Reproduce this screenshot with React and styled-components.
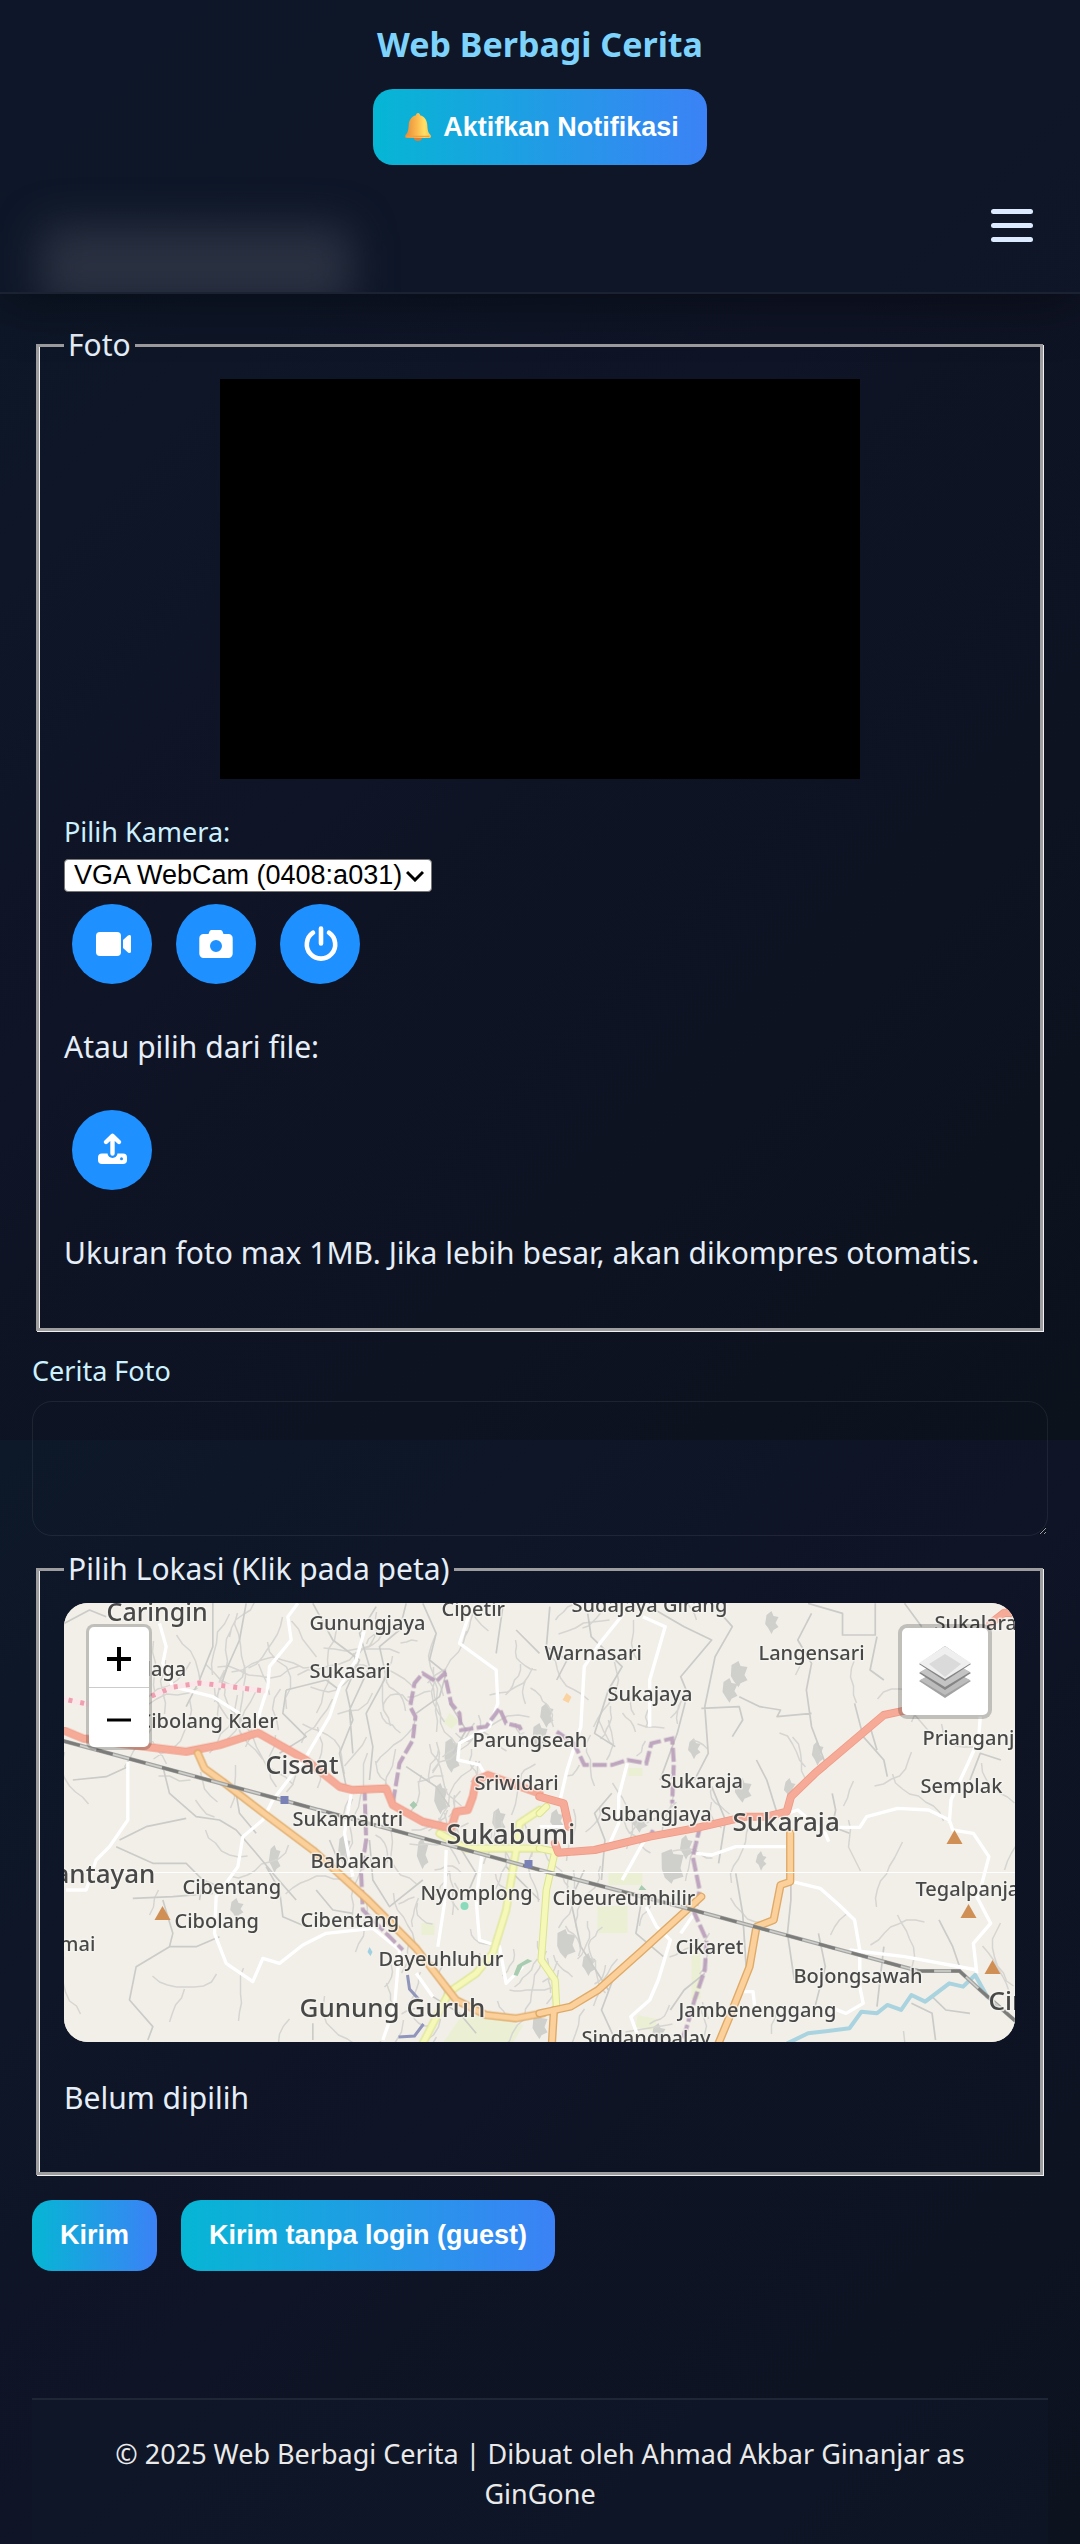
import React from "react";
import styled, { createGlobalStyle } from "styled-components";

const ui = '"Noto Sans", "Open Sans", sans-serif';
const control = '"Liberation Sans", Arial, sans-serif';

const GlobalStyle = createGlobalStyle`
  *, *::before, *::after { box-sizing: border-box; }
  body {
    margin: 0;
    color: #e6eef8;
    font-family: ${ui};
    font-size: 30px;
    line-height: 48px;
    background-color: #0e1525;
    background-image: linear-gradient(135deg, #0d1828 0%, #0f1426 45%, #0b121c 100%);
    background-size: 100% 1440px;
  }
`;

const Header = styled.header`
  position: relative;
  z-index: 1;
  overflow: hidden;
  display: flex;
  flex-direction: column;
  align-items: center;
  padding: 20px 47px 50px;
  border-bottom: 2px solid #1b2333;
  background: rgba(15, 23, 42, 0.6);
  box-shadow: 0 10px 48px rgba(0, 0, 0, 0.4);
`;

const HeadingGlow = styled.div`
  position: absolute;
  left: 40px;
  bottom: -16px;
  width: 312px;
  height: 82px;
  border-radius: 16px;
  background: #2a3141;
  filter: blur(20px);
`;

const Title = styled.h1`
  margin: 0 0 21px;
  color: #7dd3fc;
  font-size: 34px;
  line-height: 48px;
  font-weight: 700;
`;

const GradientButton = styled.button`
  display: flex;
  align-items: center;
  gap: 12px;
  border: 0;
  border-radius: 20px;
  padding: ${(p) => (p.$large ? "23px 28px 23px 32px" : "20px 28px 21px")};
  color: #fff;
  background: linear-gradient(90deg, #06b6d4, #3b82f6);
  font-family: ${control};
  font-size: 27px;
  line-height: 30px;
  font-weight: 700;
`;

const MenuButton = styled.button`
  position: relative;
  align-self: flex-end;
  display: flex;
  flex-direction: column;
  gap: 9px;
  margin-top: 44px;
  padding: 0;
  border: 0;
  background: none;
`;

const MenuBar = styled.span`
  width: 42px;
  height: 5px;
  border-radius: 3px;
  background: #dbeafe;
`;

const Main = styled.main`
  padding: 29px 32px 0;
`;

const Fieldset = styled.fieldset`
  min-width: 0;
  margin: 0 5px 0 4px;
  padding: 12px 25px;
  border: 3px solid #9d9d9f;
  box-shadow: 1px 1px 0 #eef0f2, inset 1px 0 0 #eef0f2;
`;

const Legend = styled.legend`
  padding: 0 4px;
  line-height: 44px;
`;

const Preview = styled.video`
  display: block;
  width: 640px;
  max-width: 100%;
  height: 400px;
  margin: 0 auto 33px;
  background: #000;
`;

const Label = styled.label`
  display: block;
  color: #cdf1fe;
  font-size: 27px;
  line-height: 40px;
`;

const SelectWrap = styled.div`
  display: grid;
  width: 368px;
  margin: 7px 0 12px;
  align-items: center;
  & > * { grid-area: 1 / 1; }
  & > svg { justify-self: end; margin-right: 8px; pointer-events: none; }
`;

const Select = styled.select`
  appearance: none;
  width: 100%;
  height: 33px;
  padding: 0 28px 0 9px;
  border: 1px solid #767676;
  border-radius: 4px;
  color: #000;
  background: #fff;
  font-family: ${control};
  font-size: 27px;
  line-height: 31px;
`;

const RoundRow = styled.div`
  display: flex;
  gap: 24px;
  padding-left: 8px;
`;

const RoundButton = styled.button`
  width: 80px;
  height: 80px;
  padding: 0;
  border: 0;
  border-radius: 50%;
  color: #fff;
  background: #1e90ff;
  & > svg { display: block; }
`;

const Text = styled.p`
  margin: 39px 0;
`;

const Story = styled.div`
  margin: 20px 0 11px;
`;

const TextArea = styled.textarea`
  display: block;
  width: 100%;
  height: 135px;
  margin-top: 10px;
  padding: 16px;
  border: 1px solid rgba(255, 255, 255, 0.07);
  border-radius: 20px;
  color: #e6eef8;
  background: transparent;
  font-family: ${ui};
  font-size: 27px;
`;

const MapBox = styled.div`
  position: relative;
  height: 439px;
  overflow: hidden;
  border-radius: 24px;
  background: #f2efe9;
`;

const MapArt = styled.svg`
  display: block;
  width: 100%;
  height: 100%;
`;

const ZoomControl = styled.div`
  position: absolute;
  top: 21px;
  left: 22px;
  width: 66px;
  border: 3px solid rgba(0, 0, 0, 0.2);
  border-radius: 8px;
  background: #fff;
  background-clip: padding-box;
`;

const ZoomButton = styled.button`
  display: block;
  width: 100%;
  height: 60px;
  padding: 4px 18px 0;
  border: 0;
  background: none;
  & + & { border-top: 1px solid #ccc; }
  & > svg { display: block; }
`;

const LayersButton = styled.button`
  position: absolute;
  top: 21px;
  right: 23px;
  width: 94px;
  height: 95px;
  padding: 0;
  display: grid;
  place-items: center;
  border: 4px solid rgba(0, 0, 0, 0.2);
  border-radius: 9px;
  background: #fff;
  background-clip: padding-box;
`;

const LocationText = styled.p`
  margin: 32px 0 38px;
`;

const Actions = styled.div`
  display: flex;
  gap: 24px;
  margin-top: 25px;
`;

const Footer = styled.footer`
  margin: 127px 32px 0;
  padding: 34px 64px 30px;
  border-top: 2px solid #1f2635;
  color: #eaeaea;
  background: rgba(15, 23, 42, 0.6);
  font-size: 27px;
  line-height: 40px;
  text-align: center;
`;

const Bell = () => (
  <svg width="26" height="28" viewBox="0 0 26 28" aria-hidden="true">
    <defs>
      <linearGradient id="bell" x1="0" x2="1">
        <stop offset="0" stopColor="#e58a3c" />
        <stop offset="0.45" stopColor="#fbb84c" />
        <stop offset="0.75" stopColor="#ffe066" />
        <stop offset="1" stopColor="#fcc04f" />
      </linearGradient>
    </defs>
    <ellipse cx="13" cy="25" rx="4" ry="3" fill="#d9803a" />
    <path d="M13 0c1.300 0 2 1 2 2.200 4.500 1 7 4.800 7.300 9.800.3 5.500.8 7.500 3.200 10 .8 1 .5 3-.8 3H1.300C0 25-.3 23 .5 22c2.400-2.500 2.900-4.500 3.200-10C4 7 6.500 3.200 11 2.200 11 1 11.700 0 13 0z" fill="url(#bell)" />
    <path d="M1.500 23.500h23" stroke="#eea045" strokeWidth="1.500" />
  </svg>
);

const VideoIcon = () => (
  <svg width="80" height="80" viewBox="0 0 80 80" fill="currentColor" aria-hidden="true">
    <rect x="24" y="28" width="25" height="24" rx="4" />
    <path d="M51 36l5-4.500c1.500-1 3-.5 3 1v15c0 1.500-1.500 2-3 1L51 44z" />
  </svg>
);

const CameraIcon = () => (
  <svg width="80" height="80" viewBox="0 0 80 80" fill="currentColor" aria-hidden="true">
    <path fillRule="evenodd" d="M27.500 30h5l1-2.500c.4-1 1.200-1.500 2.200-1.500h8.600c1 0 1.800.5 2.200 1.500l1 2.500h5a4.200 4.200 0 0 1 4.200 4.200v15.600a4.200 4.200 0 0 1-4.200 4.200h-25a4.200 4.200 0 0 1-4.200-4.200V34.200A4.200 4.200 0 0 1 27.500 30zM40 36a6 6 0 1 0 0 12 6 6 0 0 0 0-12z" />
  </svg>
);

const PowerIcon = () => (
  <svg width="80" height="80" viewBox="0 0 80 80" fill="none" stroke="currentColor" strokeWidth="4.600" strokeLinecap="round" aria-hidden="true">
    <path d="M41 24.500V39.500M33 28.700a14.200 14.200 0 1 0 16 0" />
  </svg>
);

const UploadIcon = () => (
  <svg width="80" height="80" viewBox="0 0 80 80" aria-hidden="true">
    <rect x="26" y="43.500" width="29" height="10.500" rx="4" fill="currentColor" />
    <path d="M35.500 43a5 5 0 0 0 10 0" fill="#1e90ff" />
    <path d="M40.500 26v17.500M34 32l6.500-6.200L47 32" fill="none" stroke="currentColor" strokeWidth="4.400" strokeLinecap="round" strokeLinejoin="round" />
    <circle cx="49.500" cy="48.800" r="1.500" fill="#1e90ff" />
  </svg>
);

const LayersIcon = () => (
  <svg width="52" height="52" viewBox="0 0 52 52" aria-hidden="true">
    <path d="M0 35l26-15 26 15-26 17z" fill="#a2a2a2" />
    <path d="M1 34l25 15 25-15-25-12z" fill="#bcbcbc" />
    <path d="M0 27l26-15 26 15-26 17z" fill="#858585" />
    <path d="M1 26l25 15 25-15-25-14z" fill="#c4c4c4" />
    <path d="M0 18L26 0l26 18-26 17z" fill="#858585" />
    <path d="M0 17L26 0l26 17-26 16z" fill="#efefef" />
    <path d="M10 18L26 8l16 10-16 13z" fill="#dadada" />
  </svg>
);

const placeLabels = [
  ["Caringin", 43, 18, 25], ["Gunungjaya", 246, 27], ["Cipetir", 378, 13], ["Sudajaya Girang", 508, 9],
  ["laga", 82, 73], ["Sukasari", 246, 75], ["Cibolang Kaler", 75, 125], ["Warnasari", 481, 57],
  ["Langensari", 695, 57], ["Sukalara", 871, 27], ["Sukajaya", 544, 98], ["Prianganja", 859, 142],
  ["Parungseah", 409, 144], ["Cisaat", 202, 171, 25], ["Sriwidari", 411, 187], ["Sukaraja", 597, 185],
  ["Semplak", 857, 190], ["Sukamantri", 229, 223], ["Subangjaya", 537, 218], ["Sukabumi", 383, 241, 27],
  ["Sukaraja", 669, 228, 26], ["Babakan", 247, 265], ["antayan", -9, 280, 26], ["Cibentang", 119, 291],
  ["Nyomplong", 357, 297], ["Tegalpanja", 852, 293], ["Cibeureumhilir", 489, 302], ["Cibolang", 111, 325],
  ["Cibentang", 237, 324], ["mai", -4, 348], ["Cikaret", 612, 351], ["Dayeuhluhur", 315, 363],
  ["Bojongsawah", 730, 380], ["Gunung Guruh", 236, 414, 26], ["Jambenenggang", 615, 414],
  ["Cir", 925, 407, 26], ["Sindangpalay", 518, 442],
];

const peaks = [[99, 310], [891, 234], [905, 308], [929, 364]];

/* Deterministic village lanes: short wandering lines grown from a seeded sequence. */
function makeLanes(count, seed, originX, originY, spanX, spanY, step) {
  let s = seed;
  const next = () => {
    s = (s * 16807) % 2147483647;
    return s / 2147483647;
  };
  let d = "";
  for (let i = 0; i < count; i += 1) {
    let x = originX + next() * spanX;
    let y = originY + next() * spanY;
    let a = next() < 0.65 ? 1.4 + next() * 0.6 : next() * 6.28;
    d += `M${x.toFixed(0)} ${y.toFixed(0)}`;
    const n = 3 + Math.floor(next() * 6);
    for (let k = 0; k < n; k += 1) {
      a += (next() - 0.5) * 1.1;
      x += Math.cos(a) * step;
      y += Math.sin(a) * step;
      d += `L${x.toFixed(0)} ${y.toFixed(0)}`;
    }
  }
  return d;
}

const lanes =
  makeLanes(90, 71, 0, 0, 952, 439, 9) +
  makeLanes(100, 913, 300, 0, 350, 439, 6) +
  makeLanes(40, 37, 90, 0, 330, 180, 11);

const blocks = [
  [382, 135, 12, 26], [372, 180, 10, 22], [355, 235, 8, 22], [207, 242, 8, 18], [276, 232, 9, 22],
  [478, 100, 10, 14], [470, 120, 12, 20], [668, 58, 14, 16], [703, 8, 10, 12], [626, 135, 9, 10],
  [598, 246, 20, 26], [618, 232, 9, 14], [672, 175, 14, 14], [694, 248, 7, 8], [494, 326, 16, 20],
  [750, 138, 8, 14], [470, 410, 12, 16], [520, 350, 10, 12], [168, 295, 10, 10], [488, 206, 10, 12],
  [722, 175, 8, 10], [590, 420, 10, 10], [430, 205, 10, 16], [660, 75, 12, 14], [570, 210, 12, 8],
];

const leftFrame = "translate(-24 -23) scale(0.33333)";
const rightFrame = "translate(476 -23) scale(0.34436 0.33333)";

const SukabumiMap = () => (
  <MapArt viewBox="0 0 952 439" preserveAspectRatio="xMidYMid slice" role="img" aria-label="Peta Sukabumi">
    <rect width="952" height="439" fill="#f2efe9" />
    <g fill="#ebf0d4">
      <path d="M534 303h30v27h-30zM358 320h13v12h-13zM565 165h14v8h-14zM628 350h9v46h-9zM386 110l10 8-8 8-8-6zM545 270h34v12h-34zM400 410l60 12-10 17h-70zM574 412l20 4-4 12-18-4z" />
    </g>
    <g fill="#cfcfcc">
      {blocks.map(([x, y, w, h]) => (
        <path key={`${x}-${y}`} d={`M${x} ${y + 4}l${w / 2}-4 2 5 ${w / 2} 1-3 ${h / 2} 3 ${h / 3}-${w / 2} 3-2 4-${w / 3}-6-3-${h / 3}z`} />
      ))}
    </g>
    <path d={lanes} fill="none" stroke="#d6d5d1" strokeWidth="1.500" strokeLinejoin="round" />
    <g transform={leftFrame} fill="none" stroke="#cbcbc8" strokeWidth="5" strokeLinejoin="round">
      <path d="M520 60V200L480 300L440 380M620 70L600 180L560 270L540 330M75 130L150 90L200 110M820 70L880 180L960 240L920 330L940 420L900 520L920 620M1010 80L960 160L990 260L930 390L940 520M1100 70L1080 150L1020 200L1040 290L980 400L1000 500L990 600M740 330L860 300L900 330M740 330L730 400L800 470L720 520M100 600L200 590L265 560M370 560L390 640L470 710L540 720L590 750L650 820L700 880L770 960M240 780L320 740L440 715M230 800L340 850L440 850L490 900L480 960M490 900L540 920M280 955L400 950L520 940M370 960L400 1060L390 1100L470 1100L540 1070M390 1100L290 1160L270 1260L340 1340L325 1380M590 640L600 700L650 760M680 860L720 930L730 1010L800 1040M830 930L880 990L940 1000M820 1380V1330M1150 70L1190 160L1170 240L1220 280L1200 350L1130 400M1390 80L1370 220M1230 370L1280 450L1240 520M1100 560L1190 620L1230 680M990 780L1000 900L1050 980L1150 900M870 780L900 850M1260 800L1310 880L1280 950M1430 150L1500 220M1180 1250L1260 1300L1310 1360M1400 860L1500 960" />
    </g>
    <g transform={rightFrame} fill="none" stroke="#cbcbc8" strokeWidth="5" strokeLinejoin="round">
      <path d="M30 80L20 200L80 240L50 300M140 100L150 170L240 260L200 330L160 460L220 500M320 80L420 140L500 180L410 290L430 340L400 460L350 600M500 70L560 140L510 230L480 380L490 520L450 600M780 70L880 100V165H975V70M790 100L750 180L790 250L775 330L790 440L830 550M980 170L960 270L1000 300M580 350L640 380L700 390L690 410L790 400M470 385L580 380L590 420L560 470M850 640L860 690L850 740L900 760M630 540L660 600L690 700M915 370L940 470L1000 540L1010 590M960 440L980 510M730 760V960L720 1060L740 1200M810 1060L830 1160L800 1280M1000 1100L980 1280M1160 1020L1200 1100L1220 1160M1140 1250L1180 1290L1250 1300M1080 1270L1140 1300L1150 1380M1060 70L1110 140M1340 540L1280 520L1250 600M570 880L590 1000L600 1160M300 940L280 1060L360 1130M130 870L90 960L120 1100L200 1230M220 1180L180 1290L220 1380M480 1180L420 1230L380 1290M500 620L540 720L520 850M210 640L160 700L190 780L180 900" />
    </g>
    <g transform={leftFrame} fill="none" stroke="#fff" strokeWidth="10" strokeLinejoin="round">
      <path d="M775 70L745 110L755 180L690 260L685 320L660 400V450M360 130L380 200L370 250L400 320L520 350L600 400M975 150L950 240L900 320L870 410L800 530L700 660L670 720L610 770L595 860L530 950L525 1060L560 1150L640 1205L670 1135L720 1150L790 1095L860 1060L1000 1045L1080 1110L1065 1280L1030 1380M265 545V720L210 800L170 840L140 930L80 930M1290 100L1260 190L1370 270L1375 370L1350 440L1260 490L1255 540L1320 555L1340 590M935 640L915 760L940 890M1220 810L1215 970L1195 1100M1330 800L1310 960L1320 1080L1380 1100L1400 1210L1450 1160M1130 1180L1180 1250" />
    </g>
    <g transform={rightFrame} fill="none" stroke="#fff" strokeWidth="10" strokeLinejoin="round">
      <path d="M245 100L175 190L130 260L120 440L80 570L60 660M300 110L365 140L320 300V440M255 550L230 650L230 730L200 800M305 780L240 900M0 740H70M455 820L500 825L570 800H720M720 700L750 690L830 760L840 785M865 742H930L950 710L1040 685L1130 690L1190 720L1200 750L1260 760L1305 830L1280 930L1270 950L1310 1030L1260 1090L1270 1180M1280 410L1275 480L1240 560L1195 660L1190 730M735 905L815 925L870 975L915 1020L930 1110V1220L940 1270L890 1300L840 1280M310 980L340 1040L380 1080L345 1200L320 1260L265 1310L290 1380M450 1000L410 1060M580 1235H620L625 1280M900 1110L1060 1130L1270 1170" />
    </g>
    <g fill="none" stroke="#b79db9" opacity="0.9">
      <path transform={leftFrame} strokeWidth="12" strokeDasharray="42 10" d="M1060 670L1080 550L1120 480L1128 410L1112 380L1125 310L1150 280L1190 305L1215 280L1235 370L1260 400L1265 450L1340 440L1380 385L1400 430L1440 440L1450 460M975 620L980 780L965 880L970 990L1030 1050L1090 1110" />
      <path transform={rightFrame} strokeWidth="12" strokeDasharray="42 10" d="M50 455L100 490L130 555L210 555L255 540L310 550L325 490L385 475L390 550L385 670M330 750L320 770L465 745L445 830L465 930L450 1000L485 1080L480 1170L450 1260L425 1350L410 1385" />
    </g>
    <g fill="none" stroke="#9095bb" strokeWidth="3">
      <path d="M344 372l2 14 9 10M335 434l16-1 9-12" />
    </g>
    <g fill="none" strokeLinejoin="round" strokeLinecap="round">
      <g transform={leftFrame}>
        <path d="M1500 690L1440 730L1430 810L1400 990L1360 1120L1310 1180L1230 1235L1150 1390M1200 760L1280 805H1500" stroke="#dbe48f" strokeWidth="24" />
        <path d="M1500 690L1440 730L1430 810L1400 990L1360 1120L1310 1180L1230 1235L1150 1390M1200 760L1280 805H1500" stroke="#f5f8b8" strokeWidth="17" />
        <path d="M75 452L130 475L240 490L440 515L540 495L655 458L800 540L900 620L940 630L1040 625L1060 675L1150 725L1235 745L1250 695L1285 690L1300 650L1310 600L1345 585L1500 640" stroke="#ef9a85" strokeWidth="24" />
        <path d="M75 452L130 475L240 490L440 515L540 495L655 458L800 540L900 620L940 630L1040 625L1060 675L1150 725L1235 745L1250 695L1285 690L1300 650L1310 600L1345 585L1500 640" stroke="#f6ab98" strokeWidth="19" />
        <path d="M475 520L495 565L550 605L680 705L820 810L980 955L1130 1105L1250 1260L1340 1305L1430 1315L1510 1300" stroke="#dfaa68" strokeWidth="24" />
        <path d="M475 520L495 565L550 605L680 705L820 810L980 955L1130 1105L1250 1260L1340 1305L1430 1315L1510 1300" stroke="#fbd09a" strokeWidth="16" />
      </g>
      <g transform={rightFrame}>
        <path d="M0 700L20 680M0 805L45 815L20 930L5 1140L45 1200L50 1290" stroke="#dbe48f" strokeWidth="22" />
        <path d="M0 700L20 680M0 805L45 815L20 930L5 1140L45 1200L50 1290" stroke="#f5f8b8" strokeWidth="16" />
        <path d="M0 650L70 670L85 740M45 790L55 818L160 810L320 770L450 745L600 710H660L718 695L730 650L800 580L1000 405L1060 392M1310 130L1350 98L1390 100" stroke="#ef9a85" strokeWidth="24" />
        <path d="M0 650L70 670L85 740M45 790L55 818L160 810L320 770L450 745L600 710H660L718 695L730 650L800 580L1000 405L1060 392M1310 130L1350 98L1390 100" stroke="#f6ab98" strokeWidth="19" />
        <path d="M0 1300L90 1280L170 1230L300 1110L470 950M728 760V905L700 915L680 1020L630 1040L610 1160L560 1290L520 1390M42 1290L36 1390" stroke="#dfaa68" strokeWidth="24" />
        <path d="M0 1300L90 1280L170 1230L300 1110L470 950M728 760V905L700 915L680 1020L630 1040L610 1160L560 1290L520 1390M42 1290L36 1390" stroke="#fbd09a" strokeWidth="16" />
        <path d="M720 1390L780 1360L900 1345L935 1295L980 1300L1010 1275L1050 1290L1080 1245L1120 1265L1190 1210L1230 1220L1265 1185L1300 1250" stroke="#a9d3df" strokeWidth="12" />
      </g>
    </g>
    <path d="M0 138L230 200L484 269L622 305L855 368H896L920 390L952 418" fill="none" stroke="#a5a5a3" strokeWidth="4" />
    <path d="M0 138L230 200L484 269L622 305L855 368H896L920 390L952 418" fill="none" stroke="#cfcfcc" strokeWidth="1.500" />
    <path d="M0 138L230 200L484 269L622 305L855 368H896L920 390L952 418" fill="none" stroke="#7c7c7a" strokeWidth="3" strokeDasharray="17 17" />
    <path d="M0 96l28 6M88 93l22-9 26-4 26 3 40 5" fill="none" stroke="#fbe7e9" strokeWidth="5" />
    <path d="M5 97l23 5M88 93l22-9 26-4 26 3 40 5" fill="none" stroke="#ef9fb0" strokeWidth="5" strokeDasharray="4 8" />
    <path d="M0 269.500H952" stroke="#fff" strokeWidth="1" />
    <g fill="#7a81b5"><path d="M217 193h8v8h-8zM461 257h8v8h-8z" /></g>
    <g fill="#a8ccb0"><path d="M450 372l4-10 10-6 5 2-10 5-5 10zM350 198l4 4-4 4-4-4zM578 282l5 5h-8z" /></g>
    <circle cx="401" cy="303" r="4" fill="#8adbbb" />
    <path d="M306 344l3 5-2 4-3-4z" fill="#9fd0e2" />
    <path d="M503 90l5 4-3 6-6-3z" fill="#fad3a0" />
    <g fill="#d08f55">
      {peaks.map(([x, y]) => <path key={x} d={`M${x} ${y - 7}l8 14h-16z`} />)}
    </g>
    <g fontFamily='"Noto Sans", sans-serif' fontWeight="500" fill="#484848" stroke="#f6f4ef" strokeOpacity="0.75" strokeWidth="3" paintOrder="stroke" strokeLinejoin="round">
      {placeLabels.map(([name, x, y, size = 20]) => (
        <text key={`${name}-${x}`} x={x} y={y} fontSize={size}>{name}</text>
      ))}
    </g>
  </MapArt>
);

export default function App() {
  return (
    <>
      <GlobalStyle />
      <Header>
        <HeadingGlow />
        <Title>Web Berbagi Cerita</Title>
        <GradientButton type="button" $large><Bell />Aktifkan Notifikasi</GradientButton>
        <MenuButton type="button" aria-label="Menu">
          <MenuBar /><MenuBar /><MenuBar />
        </MenuButton>
      </Header>
      <Main>
        <form onSubmit={(e) => e.preventDefault()}>
          <Fieldset>
            <Legend>Foto</Legend>
            <Preview />
            <Label htmlFor="camera">Pilih Kamera:</Label>
            <SelectWrap>
              <Select id="camera">
                <option>VGA WebCam (0408:a031)</option>
              </Select>
              <svg width="18" height="12" viewBox="0 0 18 12" fill="none" stroke="#000" strokeWidth="3" aria-hidden="true">
                <path d="M1 2l8 8 8-8" />
              </svg>
            </SelectWrap>
            <RoundRow>
              <RoundButton type="button" aria-label="Buka kamera"><VideoIcon /></RoundButton>
              <RoundButton type="button" aria-label="Ambil foto"><CameraIcon /></RoundButton>
              <RoundButton type="button" aria-label="Matikan kamera"><PowerIcon /></RoundButton>
            </RoundRow>
            <Text>Atau pilih dari file:</Text>
            <RoundRow>
              <RoundButton type="button" aria-label="Unggah foto"><UploadIcon /></RoundButton>
            </RoundRow>
            <Text>Ukuran foto max 1MB. Jika lebih besar, akan dikompres otomatis.</Text>
          </Fieldset>
          <Story>
            <Label htmlFor="story">Cerita Foto</Label>
            <TextArea id="story" />
          </Story>
          <Fieldset>
            <Legend>Pilih Lokasi (Klik pada peta)</Legend>
            <MapBox>
              <SukabumiMap />
              <ZoomControl>
                <ZoomButton type="button" aria-label="Perbesar">
                  <svg width="24" height="24" viewBox="0 0 24 24" stroke="#000" strokeWidth="4"><path d="M0 12h24M12 0v24" /></svg>
                </ZoomButton>
                <ZoomButton type="button" aria-label="Perkecil">
                  <svg width="24" height="24" viewBox="0 0 24 24" stroke="#000" strokeWidth="3"><path d="M0 12h24" /></svg>
                </ZoomButton>
              </ZoomControl>
              <LayersButton type="button" aria-label="Lapisan peta"><LayersIcon /></LayersButton>
            </MapBox>
            <LocationText>Belum dipilih</LocationText>
          </Fieldset>
          <Actions>
            <GradientButton type="submit">Kirim</GradientButton>
            <GradientButton type="button">Kirim tanpa login (guest)</GradientButton>
          </Actions>
        </form>
      </Main>
      <Footer>© 2025 Web Berbagi Cerita | Dibuat oleh Ahmad Akbar Ginanjar as GinGone</Footer>
    </>
  );
}
